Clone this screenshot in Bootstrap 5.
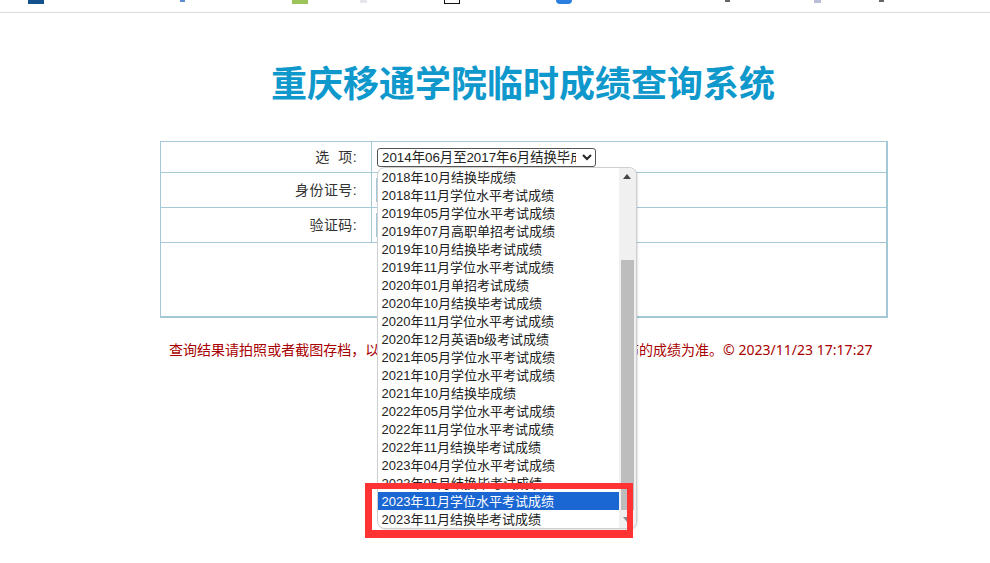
<!DOCTYPE html>
<html lang="zh-CN">
<head>
  <meta charset="UTF-8" />
  <meta name="viewport" content="width=device-width, initial-scale=1.0" />
  <title>重庆移通学院临时成绩查询系统</title>
  <link href="https://cdn.jsdelivr.net/npm/bootstrap@5.3.3/dist/css/bootstrap.min.css" rel="stylesheet" />
  <script src="https://cdn.jsdelivr.net/npm/bootstrap@5.3.3/dist/js/bootstrap.bundle.min.js"></script>
  <style>
    body { font-family: "Liberation Sans", "Noto Sans CJK SC", sans-serif; font-size: 14px; color: #333; background: #fff; overflow: hidden; }

    /* top bookmark bar, only the bottom of the icons shows */
    .bm-bar { height: 13px; border-bottom: 1px solid #dcdcdc; overflow: hidden; }
    .bm-ico { display: block; height: 4px; flex: none; }
    .bm-1 { width: 16px; margin-left: 28px; background: #14508c; }
    .bm-2 { width: 5px; margin-left: 136px; background: #5b8fd0; height: 2px; }
    .bm-3 { width: 16px; margin-left: 107px; background: #9cc45a; }
    .bm-4 { width: 7px; margin-left: 52px; background: #e6e6ee; height: 3px; }
    .bm-5 { width: 16px; margin-left: 77px; background: #fff; border: 1px solid #111; border-top: 0; }
    .bm-6 { width: 16px; margin-left: 96px; background: #2b7de0; border-radius: 0 0 6px 6px; }
    .bm-7 { width: 5px; margin-left: 153px; background: #666; height: 2px; }
    .bm-8 { width: 7px; margin-left: 84px; background: #b9bdd8; height: 3px; }
    .bm-9 { width: 5px; margin-left: 58px; background: #666; height: 2px; }

    .page-wrap { width: 728px; margin-left: 160px; }
    .sys-title { margin: 51px 0 35px; padding-right: 2px; height: 42px; line-height: 42px; font-size: 36px; font-weight: 700; color: #0e98cc; text-align: center; white-space: nowrap; }

    .query-tb { width: 728px; border-collapse: collapse; table-layout: fixed; }
    .query-tb td { border: 1px solid #a5c8d6; padding: 0; vertical-align: middle; }
    .query-tb tr:last-child td { border-bottom-width: 2px; }
    .query-tb td:last-child { border-right-width: 2px; }
    .query-tb .lbl { width: 211px; text-align: right; padding-right: 14px; letter-spacing: .4px; }
    .query-tb .val { padding-left: 5px; position: relative; }
    .row-a { height: 31px; }
    .row-b { height: 35px; }
    .row-c { height: 74px; }

    .term-sel { display: block; width: 219px; height: 19px; padding: 0 3px 0 0; font-size: 13.33px; font-family: inherit; color: #222; background: #fff; border: 1px solid #555; border-radius: 3px; }
    .txt-in { display: block; width: 200px; height: 24px; margin-left: -1px; border: 1px solid #a5c8d6; border-left-width: 2px; padding: 0; }

    .note-line { margin: 22px 0 0 9px; font-size: 14px; line-height: 20px; letter-spacing: .02px; color: #a80000; white-space: pre; font-family: "Noto Sans", "Noto Sans CJK SC", sans-serif; }

    /* opened select list */
    .drop-list { position: absolute; left: 377px; top: 167px; width: 260px; height: 362px; background: #fff; border: 1px solid #cfcfcf; border-radius: 8px; overflow: hidden; box-shadow: 1px 1px 2px rgba(0,0,0,.12); z-index: 5; }
    .drop-item { height: 18px; line-height: 20px; padding-left: 3.5px; font-size: 13px; color: #222; white-space: nowrap; width: 242px; overflow: hidden; }
    .drop-item.on { background: #1a66d2; color: #fff; }
    .drop-bar { position: absolute; right: 0; top: 0; bottom: 0; width: 17px; background: #f0f0f0; }
    .drop-thumb { position: absolute; left: 2px; right: 2px; top: 92px; height: 250px; background: #bdbdbd; }
    .arr-up { position: absolute; left: 4px; top: 6px; width: 0; height: 0; border: 4px solid transparent; border-top: 0; border-bottom: 5px solid #444; }
    .arr-down { position: absolute; left: 4px; bottom: 6px; width: 0; height: 0; border: 4px solid transparent; border-bottom: 0; border-top: 5px solid #888; }

    .red-box { position: absolute; left: 365px; top: 483px; width: 268px; height: 55px; border: solid #ff3333; border-width: 6px 6px 8px 7px; z-index: 6; }
  </style>
</head>
<body>

  <div class="bm-bar d-flex align-items-start">
    <span class="bm-ico bm-1"></span>
    <span class="bm-ico bm-2"></span>
    <span class="bm-ico bm-3"></span>
    <span class="bm-ico bm-4"></span>
    <span class="bm-ico bm-5"></span>
    <span class="bm-ico bm-6"></span>
    <span class="bm-ico bm-7"></span>
    <span class="bm-ico bm-8"></span>
    <span class="bm-ico bm-9"></span>
  </div>

  <div class="page-wrap">
    <h1 class="sys-title">重庆移通学院临时成绩查询系统</h1>

    <table class="query-tb">
      <tr class="row-a">
        <td class="lbl">选&nbsp;&nbsp;项:</td>
        <td class="val">
          <select class="term-sel">
            <option>2014年06月至2017年6月结换毕成绩</option>
          </select>
        </td>
      </tr>
      <tr class="row-b">
        <td class="lbl">身份证号:</td>
        <td class="val"><input type="text" class="txt-in" /></td>
      </tr>
      <tr class="row-b">
        <td class="lbl">验证码:</td>
        <td class="val"><input type="text" class="txt-in" /></td>
      </tr>
      <tr class="row-c">
        <td colspan="2"></td>
      </tr>
    </table>

    <p class="note-line">查询结果请拍照或者截图存档，以备后续使用， 系统数据仅供参考， 以公布的成绩为准。© 2023/11/23 17:17:27</p>
  </div>

  <div class="drop-list">
    <div class="drop-item">2018年10月结换毕成绩</div>
    <div class="drop-item">2018年11月学位水平考试成绩</div>
    <div class="drop-item">2019年05月学位水平考试成绩</div>
    <div class="drop-item">2019年07月高职单招考试成绩</div>
    <div class="drop-item">2019年10月结换毕考试成绩</div>
    <div class="drop-item">2019年11月学位水平考试成绩</div>
    <div class="drop-item">2020年01月单招考试成绩</div>
    <div class="drop-item">2020年10月结换毕考试成绩</div>
    <div class="drop-item">2020年11月学位水平考试成绩</div>
    <div class="drop-item">2020年12月英语b级考试成绩</div>
    <div class="drop-item">2021年05月学位水平考试成绩</div>
    <div class="drop-item">2021年10月学位水平考试成绩</div>
    <div class="drop-item">2021年10月结换毕成绩</div>
    <div class="drop-item">2022年05月学位水平考试成绩</div>
    <div class="drop-item">2022年11月学位水平考试成绩</div>
    <div class="drop-item">2022年11月结换毕考试成绩</div>
    <div class="drop-item">2023年04月学位水平考试成绩</div>
    <div class="drop-item">2023年05月结换毕考试成绩</div>
    <div class="drop-item on">2023年11月学位水平考试成绩</div>
    <div class="drop-item">2023年11月结换毕考试成绩</div>
    <div class="drop-bar">
      <span class="arr-up"></span>
      <div class="drop-thumb"></div>
      <span class="arr-down"></span>
    </div>
  </div>

  <div class="red-box"></div>

</body>
</html>
